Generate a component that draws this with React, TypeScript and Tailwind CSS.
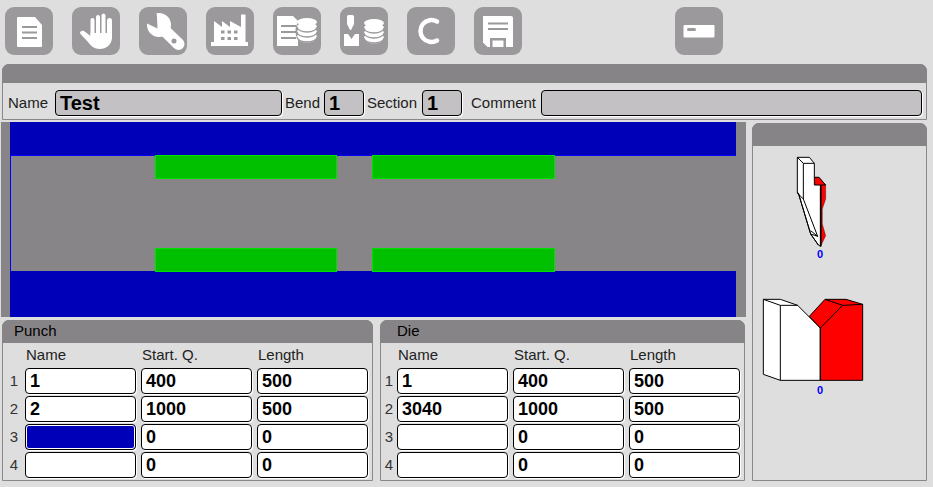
const toolbarBtn = "w-12 h-12 rounded-[9px] bg-[#9b999b] shrink-0 flex items-center justify-center";

function Doc() {
  return (
    <svg width="48" height="48" viewBox="0 0 48 48">
      <path d="M12 11a1 1 0 0 1 1-1h17l7 8v21a1 1 0 0 1-1 1H13a1 1 0 0 1-1-1z" fill="#fff" />
      <path d="M17 20h15M17 25.500h15M17 31h15" stroke="#9b999b" strokeWidth="2" />
    </svg>
  );
}

function Hand() {
  return (
    <svg width="48" height="48" viewBox="0 0 48 48" fill="#fff">
      <rect x="18.500" y="11" width="4" height="22" rx="2" />
      <rect x="24" y="8" width="4" height="22" rx="2" />
      <rect x="29.500" y="6.500" width="4" height="24" rx="2" />
      <rect x="35" y="11" width="5" height="22" rx="2.500" />
      <path d="M18.500 26H40v4c0 8-6 12-12 12c-6 0-9-3-12-7l-7.500-8c-1.500-2 1.500-4 3.500-3l6.500 5z" />
    </svg>
  );
}

function Wrench() {
  return (
    <svg width="48" height="48" viewBox="0 0 48 48">
      <circle cx="20" cy="18" r="12" fill="#fff" />
      <path d="M22 20L39 36.500" stroke="#fff" strokeWidth="12" />
      <path d="M39 36.500l.5.500" stroke="#fff" strokeWidth="12" strokeLinecap="round" />
      <path d="M18.500 21.500L7 16L3 6L17 2L18 10z" fill="#9b999b" />
      <circle cx="35" cy="34" r="2.500" fill="#9b999b" />
    </svg>
  );
}

function Factory() {
  return (
    <svg width="48" height="48" viewBox="0 0 48 48">
      <path d="M8 14l8 6v-6l8 6v-6l11 6V7.500h4.500V35H42v4H5v-4h3z" fill="#fff" />
      <path d="M15 23.500h3.500v3H15zM21.500 23.500H25v3h-3.500zM28 23.500h3.500v3H28zM15 30h3.500v3H15zM21.500 30H25v3h-3.500zM28 30h3.500v3H28z" fill="#9b999b" />
    </svg>
  );
}

function Cylinder({ x, y }: { x: number; y: number }) {
  return (
    <g transform={`translate(${x} ${y})`}>
      <ellipse cx="10" cy="19" rx="10" ry="5.500" fill="#fff" />
      <path d="M0 19a10 5 0 0 0 20 0" fill="none" stroke="#9b999b" strokeWidth="1.300" />
      <ellipse cx="10" cy="14" rx="10" ry="5" fill="#fff" />
      <path d="M0 14a10 5 0 0 0 20 0" fill="none" stroke="#9b999b" strokeWidth="1.300" />
      <ellipse cx="10" cy="9" rx="10" ry="5" fill="#fff" />
      <path d="M0 9a10 5 0 0 0 20 0" fill="none" stroke="#9b999b" strokeWidth="1.300" />
      <ellipse cx="10" cy="4" rx="10" ry="4" fill="#fff" />
    </g>
  );
}

function DocDb() {
  return (
    <svg width="48" height="48" viewBox="0 0 48 48">
      <path d="M4 9h16l5 5v25H4z" fill="#fff" />
      <path d="M8 19h15M8 25h15M8 31h15" stroke="#9b999b" strokeWidth="2" />
      <ellipse cx="34" cy="24" rx="11.500" ry="14" fill="#9b999b" />
      <Cylinder x={24} y={11} />
    </svg>
  );
}

function ToolDb() {
  return (
    <svg width="48" height="48" viewBox="0 0 48 48">
      <path d="M7 9.500A1.500 1.500 0 0 1 8.500 8h4A1.500 1.500 0 0 1 14 9.500V17l-3 6h-1l-3-6z" fill="#fff" />
      <path d="M4 27h4l3.500 5l3.500-5h4v12H4z" fill="#fff" />
      <Cylinder x={24} y={12} />
    </svg>
  );
}

function LetterC() {
  return (
    <svg width="48" height="48" viewBox="0 0 48 48">
      <path d="M30 14.500A11 11 0 1 0 30 33.500" fill="none" stroke="#fff" strokeWidth="4.500" strokeLinecap="round" />
    </svg>
  );
}

function Floppy() {
  return (
    <svg width="48" height="48" viewBox="0 0 48 48">
      <path d="M9 9h28a2 2 0 0 1 2 2v29H13.500L9 35.500z" fill="#fff" />
      <path d="M14 16.500h20M14 22h20" stroke="#9b999b" strokeWidth="2" />
      <path d="M16 40v-9h16v9h-2.500v-6.500h-11V40z" fill="#9b999b" />
    </svg>
  );
}

function Slot() {
  return (
    <svg width="48" height="48" viewBox="0 0 48 48">
      <rect x="8.500" y="18" width="31" height="12.500" rx="1" fill="#fff" />
      <rect x="12" y="21" width="9" height="3" rx="1.500" fill="#9b999b" />
    </svg>
  );
}

function PunchDrawing() {
  return (
    <svg width="35" height="95" viewBox="135 105 105 285" className="block">
      <path d="M193 175h14l20 23v42l-10 30v45l10 35l-15 32z" fill="#f00" stroke="#000" strokeWidth="1" />
      <path
        d="M142 115h36l15 18v65h19v184l-7-4l-23-33l-37-123h-3z"
        fill="#fff"
        stroke="#000"
        strokeWidth="3"
      />
      <path d="M142 115l18 18h33M160 133v107l43 112M142 222l18 18M145 222l37 123l23 33M182 335l21 17M182 345l21 7M193 175l14 0l20 23h-15" fill="none" stroke="#000" strokeWidth="3" />
      <path d="M212 198v184" stroke="#000" strokeWidth="5" />
    </svg>
  );
}

function DieDrawing() {
  return (
    <svg width="104" height="85" viewBox="30 54 312 255" className="block">
      <path d="M37 61h51l52 18l68 68v157H88l-51-18z" fill="#fff" stroke="#000" strokeWidth="3" />
      <path d="M222 61h63l50 15v228H208V147l-33-35z" fill="#f00" stroke="#000" strokeWidth="3" />
      <path d="M37 61l51 18h52M88 79v225M222 61l53 18l60-3M275 79l-67 68M208 147v157" fill="none" stroke="#000" strokeWidth="3" />
    </svg>
  );
}

function Field({ value, className, bold = "text-[18px]" }: { value?: string; className: string; bold?: string }) {
  return (
    <div
      className={`h-[26px] rounded-[4px] border border-black shadow-[1px_1px_0_#fff] flex items-center pl-[4px] font-bold leading-none ${bold} ${className}`}
    >
      {value}
    </div>
  );
}

type Row = { name: string; start: string; length: string; selected?: boolean };

const punchRows: Row[] = [
  { name: "1", start: "400", length: "500" },
  { name: "2", start: "1000", length: "500" },
  { name: "", start: "0", length: "0", selected: true },
  { name: "", start: "0", length: "0" },
];

const dieRows: Row[] = [
  { name: "1", start: "400", length: "500" },
  { name: "3040", start: "1000", length: "500" },
  { name: "", start: "0", length: "0" },
  { name: "", start: "0", length: "0" },
];

function ToolTable({ title, rows, className, titleClass, numClass }: { title: string; rows: Row[]; className: string; titleClass: string; numClass: string }) {
  return (
    <section className={`h-[161px] border border-[#8a888a] rounded-t-[7px] ${className}`}>
      <div className={`h-[23px] -mx-px -mt-px bg-[#868486] rounded-t-[7px] flex items-center text-[15px] text-black ${titleClass}`}>
        {title}
      </div>
      <div className="flex h-[25px] items-center text-[15px] text-[#222]">
        <div className={numClass} />
        <div className="w-[116px] pl-px">Name</div>
        <div className="w-[116px] pl-px">Start. Q.</div>
        <div className="pl-px">Length</div>
      </div>
      <div className="flex flex-col gap-[2px]">
        {rows.map((r, i) => (
          <div key={i} className="flex items-center">
            <div className={`text-[15px] text-[#333] text-center ${numClass}`}>{i + 1}</div>
            <div className="flex gap-[5px]">
              <Field value={r.name} className={`w-[111px] ${r.selected ? "bg-[#0000b8] outline outline-1 -outline-offset-2 outline-white" : "bg-white"}`} />
              <Field value={r.start} className="w-[111px] bg-white" />
              <Field value={r.length} className="w-[111px] bg-white" />
            </div>
          </div>
        ))}
      </div>
    </section>
  );
}

export default function App() {
  return (
    <div className="w-[933px] h-[487px] overflow-hidden bg-[#dedede] text-black font-['Liberation_Sans',Arial,sans-serif]">
      <div className="flex gap-[19px] pl-[5px] pt-[7px] h-[64px]">
        <div className={toolbarBtn}><Doc /></div>
        <div className={toolbarBtn}><Hand /></div>
        <div className={toolbarBtn}><Wrench /></div>
        <div className={toolbarBtn}><Factory /></div>
        <div className={toolbarBtn}><DocDb /></div>
        <div className={toolbarBtn}><ToolDb /></div>
        <div className={toolbarBtn}><LetterC /></div>
        <div className={toolbarBtn}><Floppy /></div>
        <div className={`${toolbarBtn} ml-[134px]`}><Slot /></div>
      </div>

      <section className="ml-[2px] w-[925px] h-[56px] border border-[#8a888a] rounded-t-[7px]">
        <div className="h-[19px] -mx-px -mt-px bg-[#868486] rounded-t-[7px]" />
        <div className="flex items-center h-[26px] mt-[7px] pl-[5px] text-[15px] text-[#222]">
          <span className="w-[47px]">Name</span>
          <Field value="Test" bold="text-[20px] text-black" className="w-[227px] bg-[#c3c1c3]" />
          <span className="ml-[3px] w-[39px]">Bend</span>
          <Field value="1" bold="text-[20px] text-black" className="w-[40px] bg-[#c3c1c3]" />
          <span className="ml-[3px] w-[55px]">Section</span>
          <Field value="1" bold="text-[20px] text-black" className="w-[40px] bg-[#c3c1c3]" />
          <span className="ml-[9px] w-[70px]">Comment</span>
          <Field className="w-[381px] bg-[#c3c1c3]" />
        </div>
      </section>

      <div className="flex mt-[2px]">
        <div className="ml-px w-[745px] h-[195px] bg-[#878587] px-[9px]">
          <div className="w-[726px] h-full flex flex-col bg-[#0000b8]">
            <div className="h-[34px] shrink-0" />
            <div className="h-[116px] shrink-0 bg-[#878587] border-l border-t border-[#0000ff] flex flex-col justify-between -mt-px">
              <div className="flex gap-[35px] pl-[144px]">
                <div className="w-[182px] h-[24px] -mt-px bg-[#00c000] border border-[#00e000]" />
                <div className="w-[183px] h-[24px] -mt-px bg-[#00c000] border border-[#00e000]" />
              </div>
              <div className="flex gap-[35px] pl-[144px]">
                <div className="w-[182px] h-[24px] -mb-px bg-[#00c000] border border-[#00e000]" />
                <div className="w-[183px] h-[24px] -mb-px bg-[#00c000] border border-[#00e000]" />
              </div>
            </div>
          </div>
        </div>

        <aside className="ml-[6px] w-[175px] h-[358px] mt-px border border-[#8a888a] rounded-t-[7px]">
          <div className="h-[23px] -mx-px -mt-px bg-[#868486] rounded-t-[7px]" />
          <div className="pl-[42px] pt-[8px]">
            <PunchDrawing />
          </div>
          <div className="w-[134px] -mt-px text-center text-[#0000ff] text-[11px] font-bold leading-[12px]">0</div>
          <div className="pl-[8px] pt-[37px]">
            <DieDrawing />
          </div>
          <div className="w-[134px] text-center text-[#0000ff] text-[11px] font-bold leading-[12px] mt-[2px]">0</div>
        </aside>
      </div>

      <div className="flex ml-[2px] -mt-[161px] gap-[7px]">
        <ToolTable title="Punch" rows={punchRows} className="w-[371px]" titleClass="pl-[12px]" numClass="w-[22px]" />
        <ToolTable title="Die" rows={dieRows} className="w-[365px]" titleClass="pl-[17px]" numClass="w-[16px]" />
      </div>
    </div>
  );
}
